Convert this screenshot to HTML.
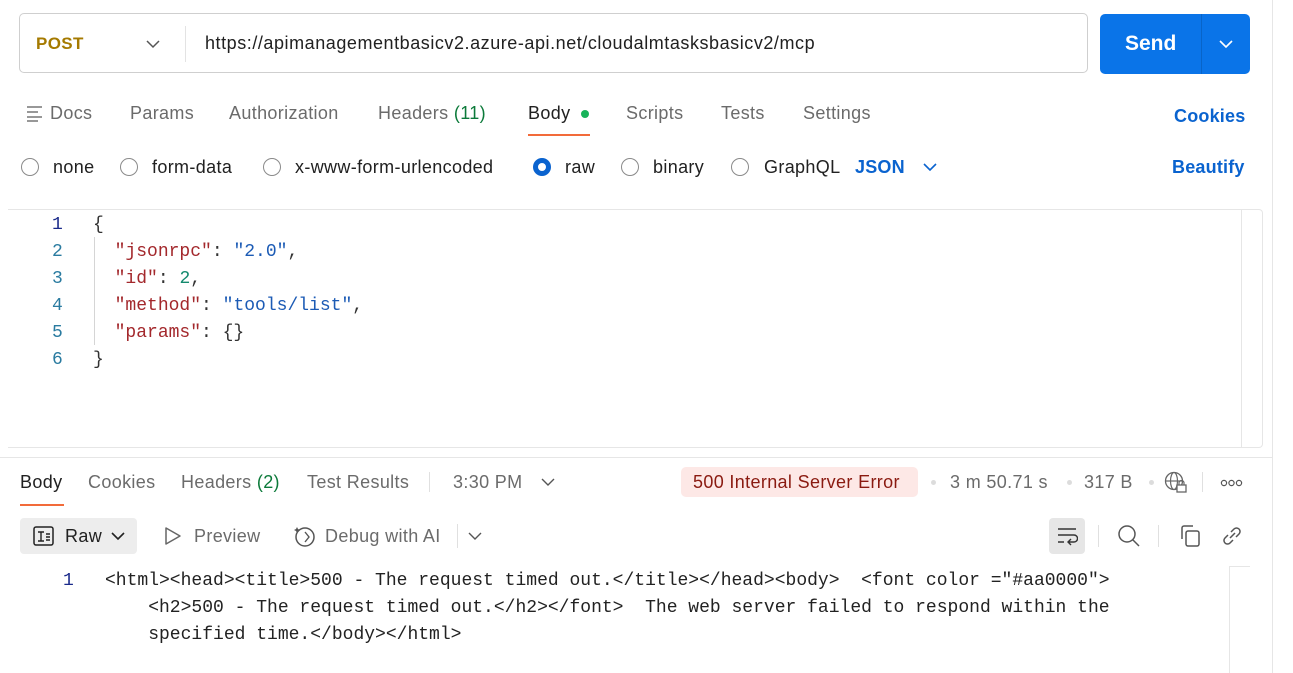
<!DOCTYPE html>
<html><head><meta charset="utf-8"><style>
body{margin:0;width:1293px;height:673px;background:#fff;position:relative;overflow:hidden;font-family:"Liberation Sans",sans-serif;font-size:18px;letter-spacing:0.35px;color:#6b6b6b}
.a{position:absolute;white-space:nowrap}
.m{font-family:"Liberation Mono",monospace;font-size:18px;white-space:pre;letter-spacing:0}
.r{position:absolute;width:18px;height:18px;border:1.5px solid #8a8a8a;border-radius:50%;box-sizing:border-box}
.d{color:#212121}
svg{position:absolute}
</style></head><body>
<div class="a" style="left:1272px;top:0;width:1px;height:673px;background:#e6e6e6"></div>
<div class="a" style="left:19px;top:13px;width:1069px;height:60px;border:1px solid #cfcfcf;border-radius:5px;box-sizing:border-box"></div>
<div class="a" style="left:36px;top:34px;color:#a57a00;font-weight:bold;font-size:17px">POST</div>
<svg style="left:145px;top:38px" width="16" height="12"><path d="M2 3l6 6 6-6" stroke="#555" stroke-width="1.5" fill="none"/></svg>
<div class="a" style="left:185px;top:26px;width:1px;height:36px;background:#e3e3e3"></div>
<div class="a d" style="left:205px;top:33px;font-size:18px;letter-spacing:0.55px">https://apimanagementbasicv2.azure-api.net/cloudalmtasksbasicv2/mcp</div>
<div class="a" style="left:1100px;top:14px;width:150px;height:60px;background:#0a74e8;border-radius:5px"></div>
<div class="a" style="left:1201px;top:14px;width:1px;height:60px;background:#0864c8"></div>
<div class="a" style="left:1125px;top:32px;color:#fff;font-weight:bold;font-size:21px;letter-spacing:0">Send</div>
<svg style="left:1217px;top:38px" width="18" height="12"><path d="M3 3l6 6 6-6" stroke="#fff" stroke-width="1.6" fill="none"/></svg>
<svg style="left:26px;top:104px" width="18" height="18"><path d="M1 3h15M1 8h11M1 13h15M1 17h11" stroke="#777" stroke-width="1.4"/></svg>
<div class="a" style="left:50px;top:103px">Docs</div>
<div class="a" style="left:130px;top:103px">Params</div>
<div class="a" style="left:229px;top:103px">Authorization</div>
<div class="a" style="left:378px;top:103px">Headers <span style="color:#0c7a3a">(11)</span></div>
<div class="a d" style="left:528px;top:103px">Body</div>
<div class="a" style="left:581px;top:110px;width:8px;height:8px;border-radius:50%;background:#18b35a"></div>
<div class="a" style="left:528px;top:134px;width:62px;height:2px;background:#f26b3a"></div>
<div class="a" style="left:626px;top:103px">Scripts</div>
<div class="a" style="left:721px;top:103px">Tests</div>
<div class="a" style="left:803px;top:103px">Settings</div>
<div class="a" style="left:1174px;top:106px;color:#0a63cf;font-weight:bold;letter-spacing:0.2px">Cookies</div>
<div class="r" style="left:21px;top:158px"></div><div class="a d" style="left:53px;top:157px">none</div>
<div class="r" style="left:120px;top:158px"></div><div class="a d" style="left:152px;top:157px">form-data</div>
<div class="r" style="left:263px;top:158px"></div><div class="a d" style="left:295px;top:157px">x-www-form-urlencoded</div>
<div class="r" style="left:533px;top:158px;border:5px solid #0a63cf"></div><div class="a d" style="left:565px;top:157px">raw</div>
<div class="r" style="left:621px;top:158px"></div><div class="a d" style="left:653px;top:157px">binary</div>
<div class="r" style="left:731px;top:158px"></div><div class="a d" style="left:764px;top:157px">GraphQL</div>
<div class="a" style="left:855px;top:157px;color:#0a63cf;font-weight:bold;letter-spacing:0.2px">JSON</div>
<svg style="left:922px;top:161px" width="16" height="12"><path d="M2 3l6 6 6-6" stroke="#0a63cf" stroke-width="1.6" fill="none"/></svg>
<div class="a" style="left:1172px;top:157px;color:#0a63cf;font-weight:bold;letter-spacing:0.2px">Beautify</div>
<div class="a" style="left:8px;top:209px;width:1255px;height:239px;border:1px solid #e6e6e6;border-left:none;box-sizing:border-box;border-radius:0 4px 4px 0"></div>
<div class="a" style="left:1241px;top:210px;width:1px;height:237px;background:#e6e6e6"></div>
<div class="a" style="left:94px;top:237px;width:1px;height:108px;background:#d5d5d5"></div>
<div class="a m" style="left:52px;top:212px;line-height:27px;color:#2a7ba0"><span style="color:#1a2a8a">1</span>
2
3
4
5
6</div>
<div class="a m" style="left:93px;top:212px;line-height:27px;color:#333">{
  <span style="color:#a3282c">"jsonrpc"</span>: <span style="color:#1c5bb5">"2.0"</span>,
  <span style="color:#a3282c">"id"</span>: <span style="color:#148a6e">2</span>,
  <span style="color:#a3282c">"method"</span>: <span style="color:#1c5bb5">"tools/list"</span>,
  <span style="color:#a3282c">"params"</span>: {}
}</div>
<div class="a" style="left:0;top:457px;width:1272px;height:1px;background:#e6e6e6"></div>
<div class="a d" style="left:20px;top:472px">Body</div>
<div class="a" style="left:20px;top:504px;width:44px;height:2px;background:#f26b3a"></div>
<div class="a" style="left:88px;top:472px">Cookies</div>
<div class="a" style="left:181px;top:472px">Headers <span style="color:#0c7a3a">(2)</span></div>
<div class="a" style="left:307px;top:472px">Test Results</div>
<div class="a" style="left:429px;top:472px;width:1px;height:20px;background:#e0e0e0"></div>
<div class="a" style="left:453px;top:472px">3:30 PM</div>
<svg style="left:540px;top:476px" width="16" height="12"><path d="M2 3l6 6 6-6" stroke="#555" stroke-width="1.4" fill="none"/></svg>
<div class="a" style="left:681px;top:467px;width:237px;height:30px;background:#fde8e6;border-radius:5px"></div>
<div class="a" style="left:693px;top:472px;color:#8a1a10">500 Internal Server Error</div>
<div class="a" style="left:931px;top:480px;width:5px;height:5px;border-radius:50%;background:#dcdcdc"></div>
<div class="a" style="left:950px;top:472px">3 m 50.71 s</div>
<div class="a" style="left:1067px;top:480px;width:5px;height:5px;border-radius:50%;background:#dcdcdc"></div>
<div class="a" style="left:1084px;top:472px">317 B</div>
<div class="a" style="left:1149px;top:480px;width:5px;height:5px;border-radius:50%;background:#dcdcdc"></div>
<svg style="left:1164px;top:471px" width="26" height="24"><circle cx="10" cy="10" r="8.5" stroke="#666" stroke-width="1.3" fill="none"/><ellipse cx="10" cy="10" rx="3.5" ry="8.5" stroke="#666" stroke-width="1.2" fill="none"/><path d="M2 10h16" stroke="#666" stroke-width="1.2"/><rect x="13" y="14" width="9" height="7" fill="#fff" stroke="#666" stroke-width="1.3"/><path d="M15 14v-2a2.5 2.5 0 0 1 5 0v2" stroke="#666" stroke-width="1.2" fill="none"/></svg>
<div class="a" style="left:1202px;top:472px;width:1px;height:20px;background:#e0e0e0"></div>
<svg style="left:1220px;top:478px" width="24" height="10"><circle cx="4" cy="5" r="2.6" stroke="#555" stroke-width="1.2" fill="none"/><circle cx="11.5" cy="5" r="2.6" stroke="#555" stroke-width="1.2" fill="none"/><circle cx="19" cy="5" r="2.6" stroke="#555" stroke-width="1.2" fill="none"/></svg>
<div class="a" style="left:20px;top:518px;width:117px;height:36px;background:#ededed;border-radius:4px"></div>
<svg style="left:33px;top:526px" width="22" height="20"><rect x="1" y="1" width="19" height="18" rx="2" stroke="#222" stroke-width="1.5" fill="none"/><path d="M5 6h6M8 6v9M5 15h6M13 8h4M13 11h4M13 14h4" stroke="#222" stroke-width="1.4"/></svg>
<div class="a d" style="left:65px;top:526px">Raw</div>
<svg style="left:110px;top:530px" width="16" height="12"><path d="M2 3l6 6 6-6" stroke="#222" stroke-width="1.6" fill="none"/></svg>
<svg style="left:164px;top:526px" width="18" height="20"><path d="M2 2l14 8-14 8z" stroke="#666" stroke-width="1.5" fill="none" stroke-linejoin="round"/></svg>
<div class="a" style="left:194px;top:526px">Preview</div>
<svg style="left:292px;top:524px" width="26" height="24"><circle cx="13" cy="13" r="9" stroke="#555" stroke-width="1.5" fill="none"/><path d="M5 3l1 2 2 1-2 1-1 2-1-2-2-1 2-1z" fill="#555"/><path d="M13 8l4 5-4 5" stroke="#555" stroke-width="1.4" fill="none"/></svg>
<div class="a" style="left:325px;top:526px">Debug with AI</div>
<div class="a" style="left:457px;top:524px;width:1px;height:24px;background:#e0e0e0"></div>
<svg style="left:467px;top:530px" width="16" height="12"><path d="M2 3l6 6 6-6" stroke="#555" stroke-width="1.4" fill="none"/></svg>
<div class="a" style="left:1049px;top:518px;width:36px;height:36px;background:#e6e6e6;border-radius:4px"></div>
<svg style="left:1056px;top:526px" width="22" height="20"><path d="M2 3h18M2 9h16a3.5 3.5 0 0 1 0 7h-6M15 13l-3 3 3 3M2 16h6" stroke="#333" stroke-width="1.4" fill="none"/></svg>
<div class="a" style="left:1098px;top:525px;width:1px;height:22px;background:#e0e0e0"></div>
<svg style="left:1117px;top:524px" width="26" height="26"><circle cx="10" cy="10" r="8" stroke="#555" stroke-width="1.5" fill="none"/><path d="M16 16l6 6" stroke="#555" stroke-width="1.5"/></svg>
<div class="a" style="left:1158px;top:525px;width:1px;height:22px;background:#e0e0e0"></div>
<svg style="left:1179px;top:524px" width="24" height="24"><path d="M3 15V4a2 2 0 0 1 2-2h9" stroke="#555" stroke-width="1.5" fill="none"/><rect x="7" y="7" width="13" height="15" rx="2" stroke="#555" stroke-width="1.5" fill="none"/></svg>
<svg style="left:1219px;top:523px" width="26" height="26"><path d="M11 15l5-5M9 12l-3 3a3.5 3.5 0 0 0 5 5l3-3M17 14l3-3a3.5 3.5 0 0 0-5-5l-3 3" stroke="#555" stroke-width="1.5" fill="none"/></svg>
<div class="a" style="left:1229px;top:566px;width:1px;height:107px;background:#e6e6e6"></div>
<div class="a" style="left:1229px;top:566px;width:21px;height:1px;background:#e6e6e6"></div>
<div class="a m" style="left:63px;top:568px;line-height:27px;color:#1a2a8a">1</div>
<div class="a m" style="left:105px;top:568px;line-height:27px;color:#222">&lt;html&gt;&lt;head&gt;&lt;title&gt;500 - The request timed out.&lt;/title&gt;&lt;/head&gt;&lt;body&gt;  &lt;font color ="#aa0000"&gt;
    &lt;h2&gt;500 - The request timed out.&lt;/h2&gt;&lt;/font&gt;  The web server failed to respond within the
    specified time.&lt;/body&gt;&lt;/html&gt;</div>
</body></html>
